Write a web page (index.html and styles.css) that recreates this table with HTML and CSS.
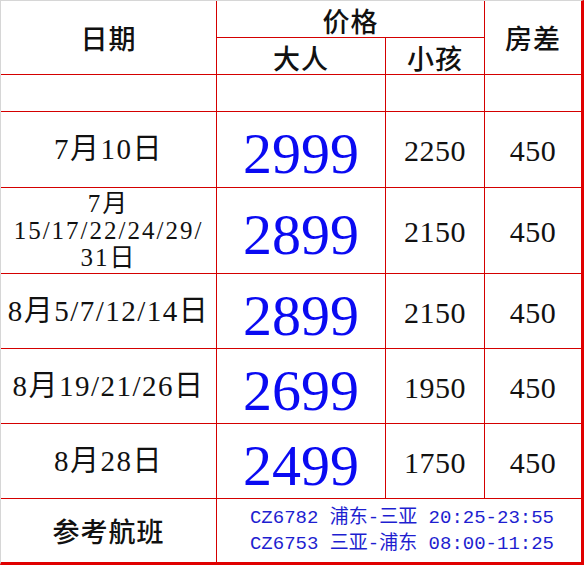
FILE: index.html
```html
<!DOCTYPE html>
<html>
<head>
<meta charset="utf-8">
<link rel="stylesheet" href="styles.css">
</head>
<body>
<div class="sheet">
  <div class="grid">
    <div class="cell head date-head">日期</div>
    <div class="cell head price-head">价格</div>
    <div class="cell head room-head">房差</div>
    <div class="cell head sub">大人</div>
    <div class="cell head sub">小孩</div>

    <div class="cell"></div>
    <div class="cell"></div>
    <div class="cell"></div>
    <div class="cell"></div>

    <div class="cell date">7月10日</div>
    <div class="cell big">2999</div>
    <div class="cell num">2250</div>
    <div class="cell num">450</div>

    <div class="cell date small">7月<br>15/17/22/24/29/<br>31日</div>
    <div class="cell big">2899</div>
    <div class="cell num">2150</div>
    <div class="cell num">450</div>

    <div class="cell date">8月5/7/12/14日</div>
    <div class="cell big">2899</div>
    <div class="cell num">2150</div>
    <div class="cell num">450</div>

    <div class="cell date">8月19/21/26日</div>
    <div class="cell big">2699</div>
    <div class="cell num">1950</div>
    <div class="cell num">450</div>

    <div class="cell date">8月28日</div>
    <div class="cell big">2499</div>
    <div class="cell num">1750</div>
    <div class="cell num">450</div>

    <div class="cell head foot">参考航班</div>
    <div class="cell flights">
      <div>CZ6782 浦东-三亚 20:25-23:55</div>
      <div>CZ6753 三亚-浦东 08:00-11:25</div>
    </div>
  </div>
</div>
</body>
</html>
```

FILE: styles.css
```css
html, body {
  margin: 0;
  padding: 0;
  background: #ffffff;
}

.sheet {
  width: 584px;
  height: 565px;
  box-sizing: border-box;
  border-top: 1px solid #d6d6d6;
  border-left: 1px solid #d6d6d6;
  border-right: 3px solid #e00000;
  border-bottom: 3px solid #e00000;
  font-family: "Liberation Serif", "Noto Sans CJK SC", serif;
  color: #111;
}

.grid {
  display: grid;
  grid-template-columns: 215px 168px 98px 96px;
  grid-template-rows: 36px 36px 36px 75px 85px 74px 74px 74px 63px;
  gap: 1px;
  background: #d40000;
  height: 561px;
}

.cell {
  background: #fff;
  display: flex;
  align-items: center;
  justify-content: center;
  text-align: center;
}

.head {
  font-size: 27px;
  font-weight: 500;
  letter-spacing: 1px;
}

.date-head {
  grid-row: 1 / 3;
}

.price-head {
  grid-column: 2 / 4;
  padding-top: 2px;
}

.room-head {
  grid-column: 4;
  grid-row: 1 / 3;
}

.sub {
  padding-top: 2px;
}

.date {
  font-size: 29px;
  line-height: 31px;
  letter-spacing: 1.5px;
}

.date.small {
  font-size: 25px;
  line-height: 27px;
  letter-spacing: 2px;
}

.big {
  font-size: 58px;
  color: #0a0af2;
  padding-top: 8px;
}

.num {
  font-size: 30px;
  padding-top: 3px;
  letter-spacing: 0.5px;
}

.foot {
  font-size: 27px;
}

.flights {
  grid-column: 2 / 5;
  flex-direction: column;
  font-family: "Liberation Mono", "Noto Sans CJK SC", monospace;
  font-size: 19px;
  line-height: 26px;
  color: #1e1ed0;
  padding-left: 6px;
}
```
